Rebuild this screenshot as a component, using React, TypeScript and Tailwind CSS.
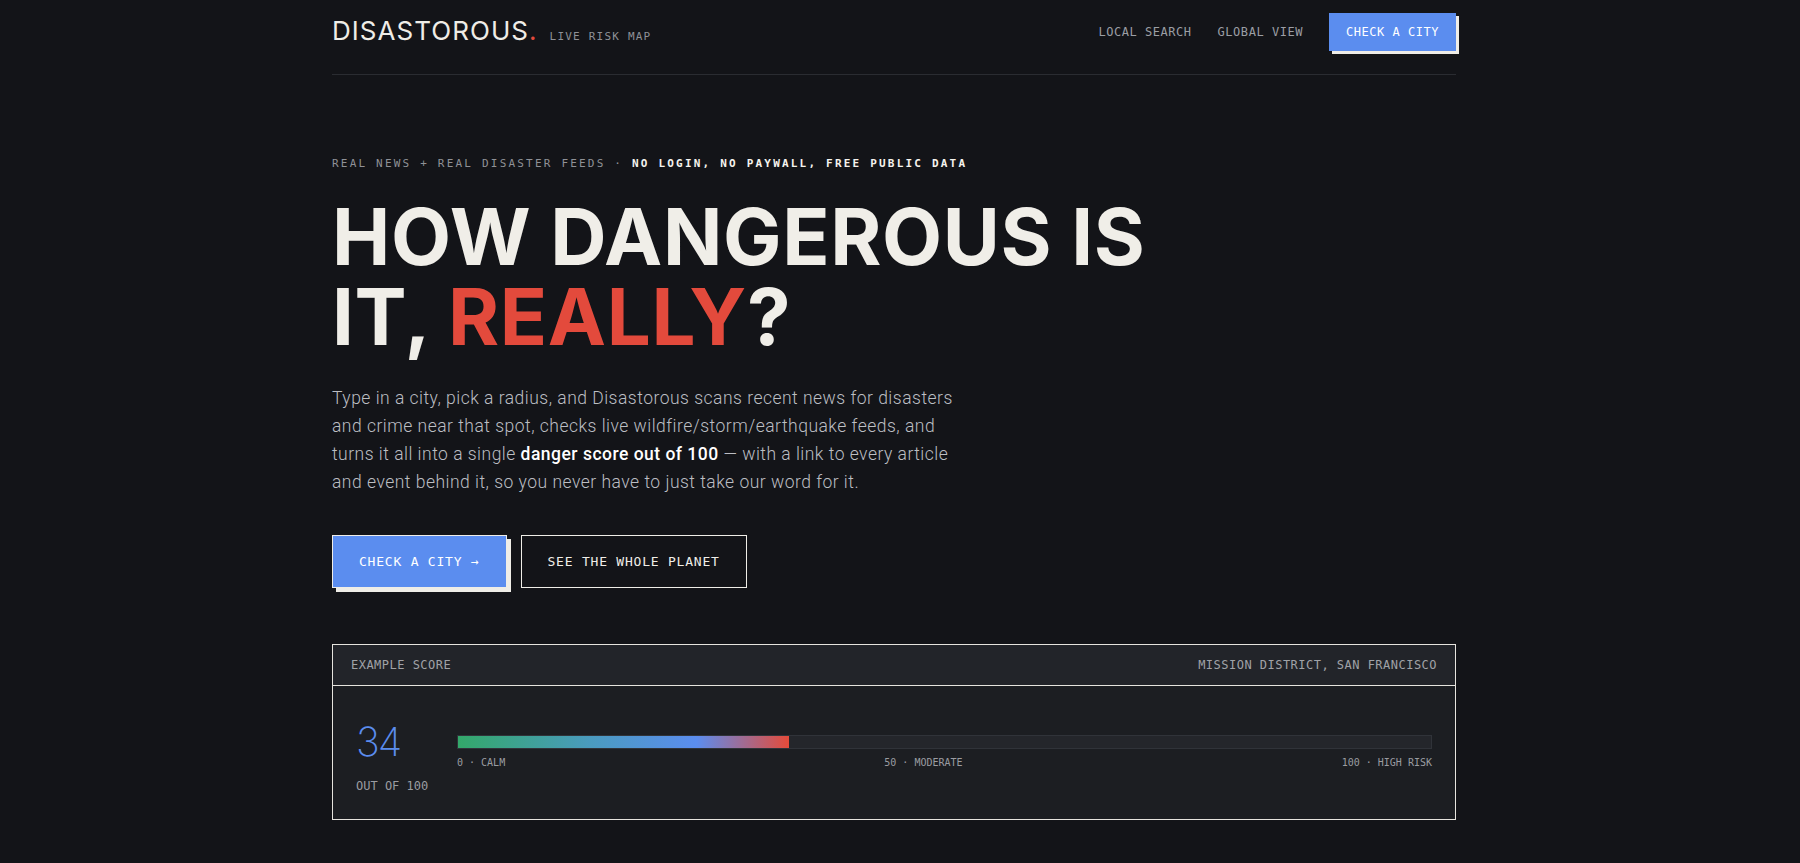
const mono = "font-['DejaVu_Sans_Mono',monospace]";

function Header() {
  return (
    <header className="flex items-center justify-between pt-[13px] pb-[23px] border-b border-[#2a2c31]">
      <div className="flex items-baseline">
        <span className="font-['Inter',sans-serif] text-[26px] leading-none font-normal tracking-[0.04em] text-[#efede7]">
          DISASTOROUS<span className="text-[#e34a3c]">.</span>
        </span>
        <span className={`${mono} ml-3 text-[11px] tracking-[0.11em] text-[#8e9197]`}>
          LIVE RISK MAP
        </span>
      </div>
      <nav className={`${mono} flex items-center gap-[26px] text-[12px] tracking-[0.045em]`}>
        <a className="text-[#9b9ea4]">LOCAL SEARCH</a>
        <a className="text-[#9b9ea4]">GLOBAL VIEW</a>
        <button className="h-[38px] w-[127px] bg-[#5b8def] text-white shadow-[3px_3px_0_#efede7]">
          CHECK A CITY
        </button>
      </nav>
    </header>
  );
}

function ScoreCard() {
  const score = 34;
  return (
    <div className="mt-14 border border-[#e6e4de] bg-[#1c1e22]">
      <div
        className={`${mono} flex h-[41px] items-center justify-between border-b border-[#e6e4de] bg-[#222429] px-[18px] text-[12px] tracking-[0.04em] text-[#a0a2a7]`}
      >
        <span>EXAMPLE SCORE</span>
        <span>MISSION DISTRICT, SAN FRANCISCO</span>
      </div>
      <div className="flex gap-6 px-[23px] pt-9 pb-[25px]">
        <div className="w-[77px] shrink-0">
          <div className="font-['Inter',sans-serif] text-[40px] font-extralight leading-none tracking-[-0.05em] text-[#5b8def]">
            {score}
          </div>
          <div className={`${mono} mt-4 text-[12px] leading-4 text-[#9a9ca1]`}>
            OUT OF 100
          </div>
        </div>
        <div className="mt-[13px] flex-1">
          <div className="h-[14px] border border-[#303339] bg-[#24262b]">
            <div
              className="h-full bg-[linear-gradient(90deg,#33a86a_0%,#4a9bbf_40%,#5b8def_72%,#e44b3a_100%)]"
              style={{ width: `${score}%` }}
            />
          </div>
          <div className={`${mono} mt-[7px] flex justify-between text-[10px] leading-[14px] text-[#9a9ca1]`}>
            <span>0 · CALM</span>
            <span>50 · MODERATE</span>
            <span>100 · HIGH RISK</span>
          </div>
        </div>
      </div>
    </div>
  );
}

export default function App() {
  return (
    <div className="min-h-screen bg-[#131418] pr-3">
      <div className="mx-auto w-[1124px] pb-16">
        <Header />
        <main>
          <p className={`${mono} mt-[81px] text-[11px] leading-4 tracking-[0.2em] text-[#8f9196]`}>
            REAL NEWS + REAL DISASTER FEEDS ·{" "}
            <span className="font-bold text-[#f5f3ee]">
              NO LOGIN, NO PAYWALL, FREE PUBLIC DATA
            </span>
          </p>
          <h1 className="mt-[25px] font-['Inter',sans-serif] text-[78px] font-bold leading-[80px] tracking-[0.008em] text-[#f0eee8]">
            HOW DANGEROUS IS
            <br />
            IT, <span className="text-[#e34a3c]">REALLY</span>?
          </h1>
          <p className="mt-[27px] max-w-[640px] font-['Roboto',sans-serif] text-[17.5px] font-light leading-[28px] tracking-[0.028em] text-[#bcbec3]">
            Type in a city, pick a radius, and Disastorous scans recent news for
            disasters and crime near that spot, checks live
            wildfire/storm/earthquake feeds, and turns it all into a single{" "}
            <span className="font-medium text-white">danger score out of 100</span>{" "}
            — with a link to every article and event behind it, so you never have
            to just take our word for it.
          </p>
          <div className={`${mono} mt-[39px] flex gap-[14px] text-[13px] tracking-[0.06em]`}>
            <button className="h-[53px] border border-[#efede7] bg-[#5b8def] px-[26px] text-white shadow-[4px_4px_0_#efede7]">
              CHECK A CITY →
            </button>
            <button className="h-[53px] border border-[#efede7] px-[26px] text-[#f0eee8]">
              SEE THE WHOLE PLANET
            </button>
          </div>
          <ScoreCard />
        </main>
      </div>
    </div>
  );
}
